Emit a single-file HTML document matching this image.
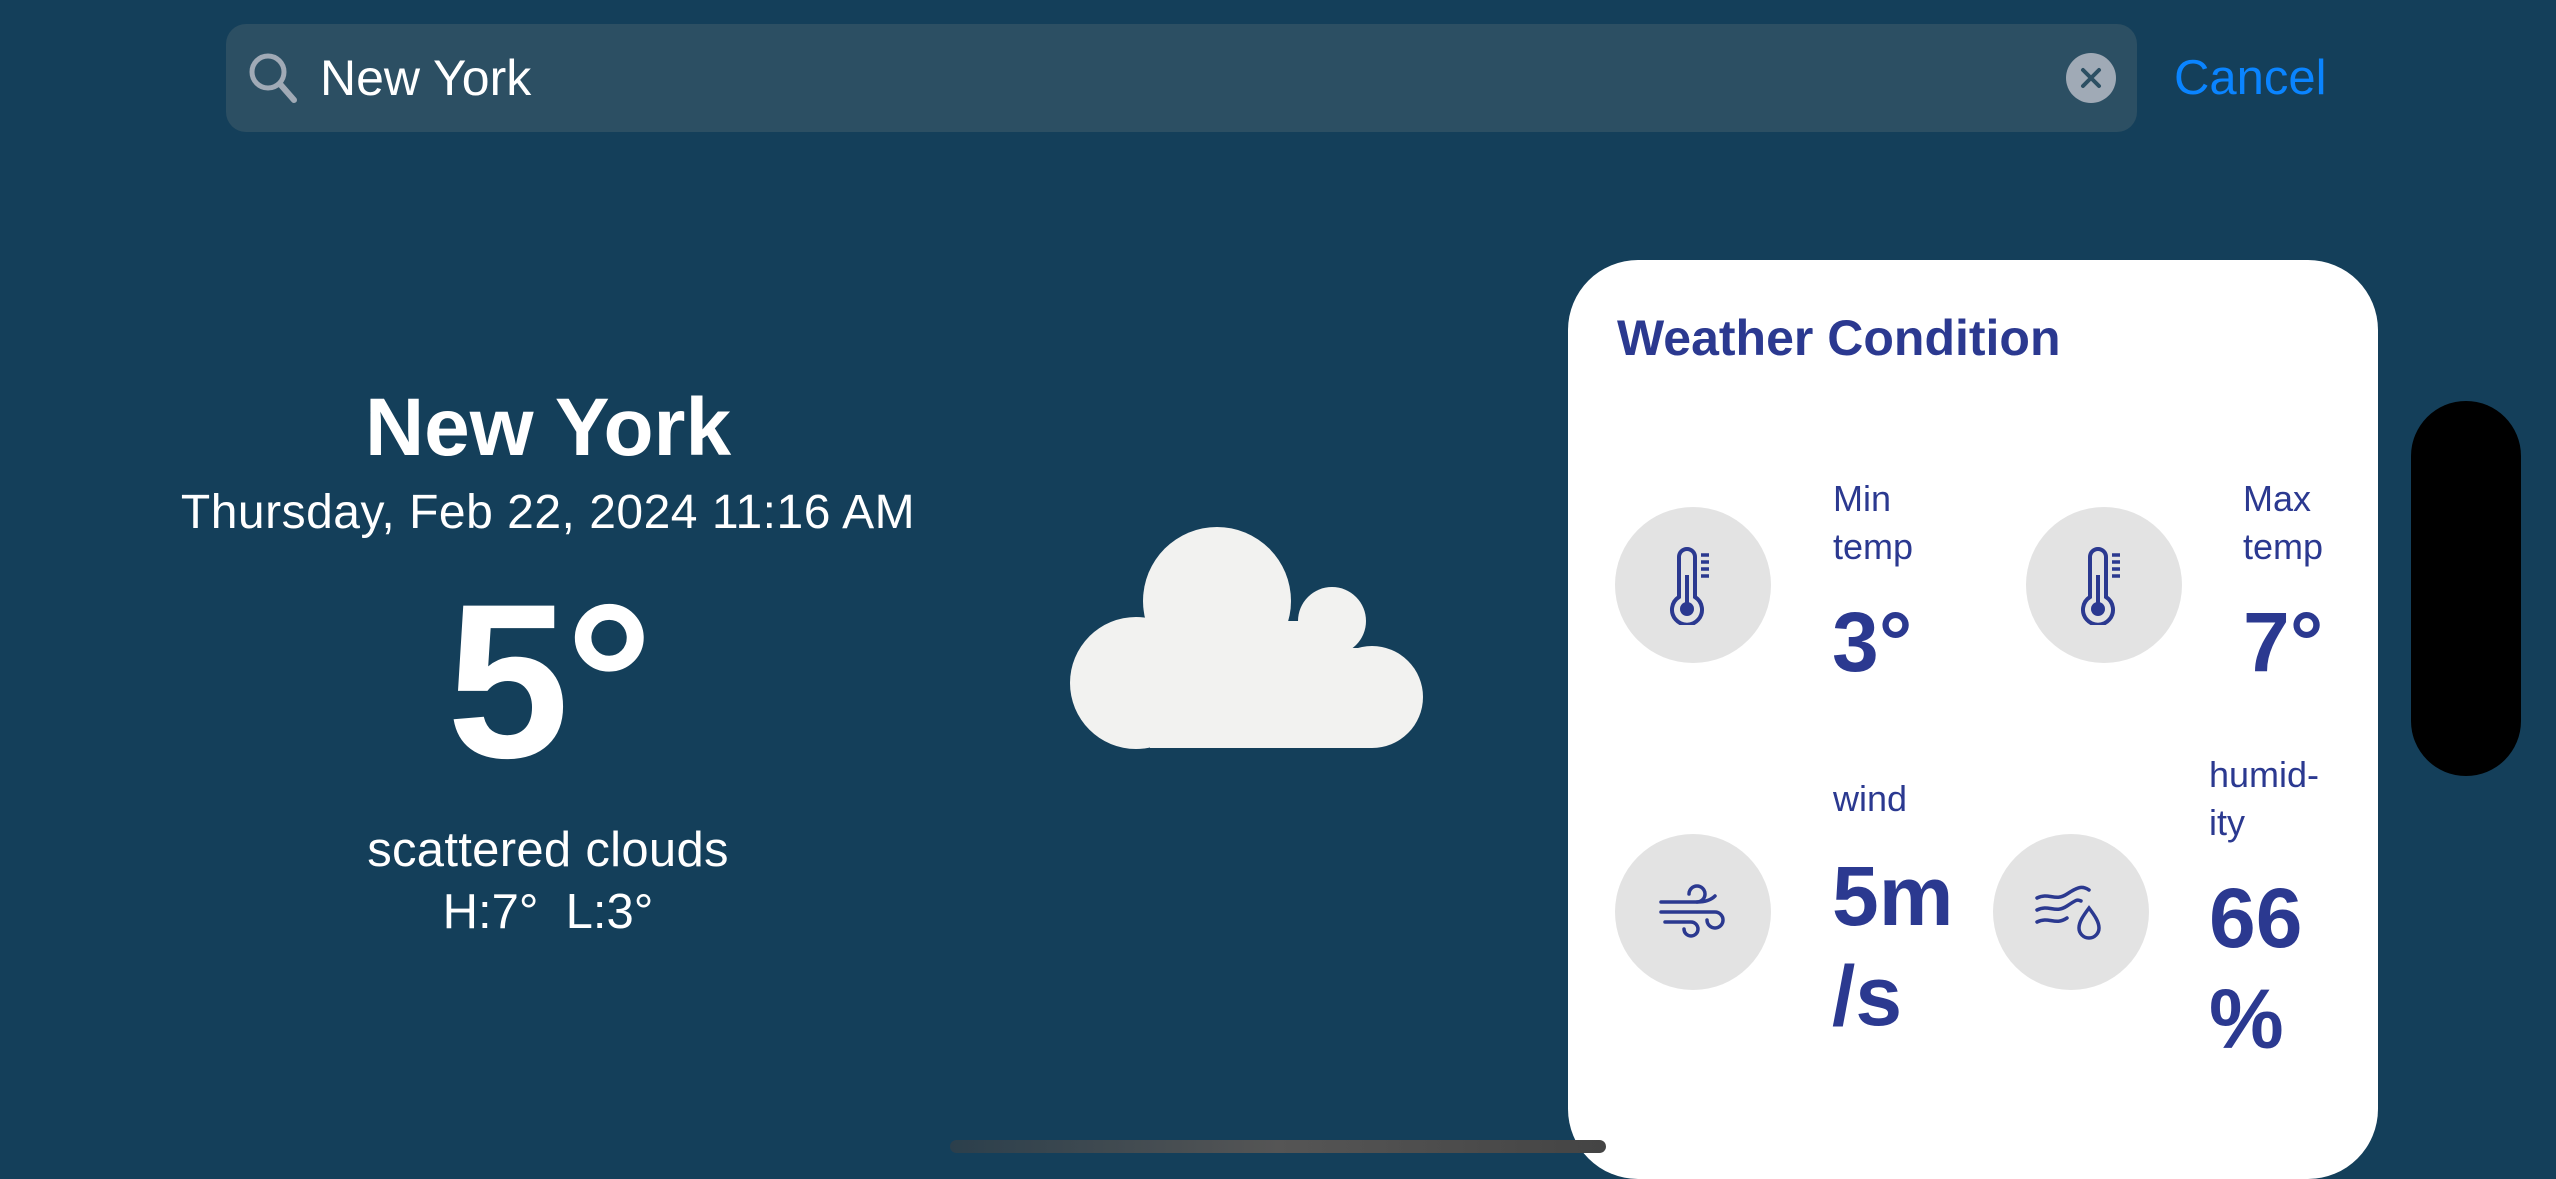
<!DOCTYPE html>
<html><head><meta charset="utf-8"><style>
html,body{margin:0;padding:0}
body{width:2556px;height:1179px;background:#143f5a;position:relative;overflow:hidden;font-family:"Liberation Sans",sans-serif}
.a{position:absolute;white-space:nowrap}
.c{position:absolute;left:0;width:1096px;text-align:center;color:#fff}
.nv{color:#2b3990}
.circ{position:absolute;width:156px;height:156px;border-radius:50%;background:#e3e3e3;display:flex;align-items:center;justify-content:center}
</style></head><body>
<div class="a" style="left:226px;top:24px;width:1911px;height:108px;border-radius:20px;background:#2c4f63"></div>
<svg class="a" style="left:246px;top:50px" width="54" height="56" viewBox="0 0 54 56"><circle cx="22" cy="22" r="16" fill="none" stroke="#a0aab6" stroke-width="5"/><line x1="34" y1="34" x2="48" y2="50" stroke="#a0aab6" stroke-width="6" stroke-linecap="round"/></svg>
<div class="a" style="left:320px;top:48px;font-size:50px;color:#fff;line-height:60px">New York</div>
<div class="a" style="left:2066px;top:53px;width:50px;height:50px;border-radius:50%;background:#a0aab6"></div>
<svg class="a" style="left:2066px;top:53px" width="50" height="50"><path d="M17 17L33 33M33 17L17 33" stroke="#2c4f63" stroke-width="4" stroke-linecap="round"/></svg>
<div class="a" style="left:2174px;top:48px;font-size:49px;color:#0a84ff;line-height:60px">Cancel</div>

<div class="c" style="top:378px;font-size:82px;font-weight:bold;line-height:100px">New York</div>
<div class="c" style="top:485px;font-size:48px;line-height:56px;letter-spacing:0.5px">Thursday, Feb 22, 2024 11:16 AM</div>
<div class="c" style="top:566px;font-size:220px;font-weight:bold;line-height:230px;letter-spacing:-4px">5°</div>
<div class="c" style="top:822px;font-size:49px;line-height:56px;letter-spacing:0.3px">scattered clouds</div>
<div class="c" style="top:884px;font-size:49px;line-height:56px">H:7°&nbsp;&nbsp;L:3°</div>

<svg class="a" style="left:0;top:0" width="2556" height="1179">
<g fill="#f2f2f0"><circle cx="1217" cy="601" r="74"/><circle cx="1332" cy="621" r="34"/><circle cx="1136" cy="683" r="66"/><circle cx="1372" cy="697" r="51"/><rect x="1150" y="648" width="222" height="100"/><rect x="1217" y="621" width="115" height="80"/></g>
</svg>

<div class="a" style="left:1568px;top:260px;width:810px;height:919px;border-radius:70px;background:#fff"></div>
<div class="a nv" style="left:1617px;top:308px;font-size:50px;font-weight:bold;line-height:60px">Weather Condition</div>

<div class="circ" style="left:1615px;top:507px"><svg width="60" height="80" viewBox="0 0 60 80"><path d="M16 52V12a8 8 0 0 1 16 0v40a15 15 0 1 1-16 0z" fill="none" stroke="#2b3990" stroke-width="4"/><circle cx="24" cy="64" r="7" fill="#2b3990"/><line x1="24" y1="30" x2="24" y2="60" stroke="#2b3990" stroke-width="4"/><path d="M38 10h8M38 17h8M38 24h8M38 31h8" stroke="#2b3990" stroke-width="3.5"/></svg></div>
<div class="circ" style="left:2026px;top:507px"><svg width="60" height="80" viewBox="0 0 60 80"><path d="M16 52V12a8 8 0 0 1 16 0v40a15 15 0 1 1-16 0z" fill="none" stroke="#2b3990" stroke-width="4"/><circle cx="24" cy="64" r="7" fill="#2b3990"/><line x1="24" y1="30" x2="24" y2="60" stroke="#2b3990" stroke-width="4"/><path d="M38 10h8M38 17h8M38 24h8M38 31h8" stroke="#2b3990" stroke-width="3.5"/></svg></div>
<div class="circ" style="left:1615px;top:834px"><svg width="72" height="64" viewBox="0 0 72 64"><g fill="none" stroke="#2b3990" stroke-width="3.5" stroke-linecap="round"><path d="M4 22h36a8 8 0 1 0-8-8"/><path d="M4 32h54a8 8 0 1 1-8 8"/><path d="M8 42h26a7 7 0 1 1-7 7"/><path d="M40 22c8 0 14-2 18-6"/></g></svg></div>
<div class="circ" style="left:1993px;top:834px"><svg width="76" height="64" viewBox="0 0 76 64"><g fill="none" stroke="#2b3990" stroke-width="3.5" stroke-linecap="round"><path d="M4 18c12-6 18 4 30-4s16-8 22-4"/><path d="M4 30c12-6 18 4 30-4s10-6 14-5"/><path d="M4 42c12-6 18 4 30-4"/><path d="M56 28c-6 8-10 14-10 20a10 10 0 0 0 20 0c0-6-4-12-10-20z"/></g></svg></div>

<div class="a nv" style="left:1833px;top:475px;font-size:36px;line-height:48px">Min<br>temp</div>
<div class="a nv" style="left:1832px;top:594px;font-size:84px;font-weight:bold;line-height:96px">3°</div>
<div class="a nv" style="left:2243px;top:475px;font-size:36px;line-height:48px">Max<br>temp</div>
<div class="a nv" style="left:2243px;top:594px;font-size:84px;font-weight:bold;line-height:96px">7°</div>
<div class="a nv" style="left:1833px;top:775px;font-size:36px;line-height:48px">wind</div>
<div class="a nv" style="left:1832px;top:846px;font-size:84px;font-weight:bold;line-height:100px">5m<br>/s</div>
<div class="a nv" style="left:2209px;top:751px;font-size:36px;line-height:48px">humid-<br>ity</div>
<div class="a nv" style="left:2209px;top:868px;font-size:84px;font-weight:bold;line-height:101px">66<br>%</div>

<div class="a" style="left:2411px;top:401px;width:110px;height:375px;border-radius:55px;background:#000"></div>
<div class="a" style="left:950px;top:1140px;width:656px;height:13px;border-radius:7px;background:linear-gradient(90deg,#2b3f4c,#555,#444)"></div>
</body></html>
